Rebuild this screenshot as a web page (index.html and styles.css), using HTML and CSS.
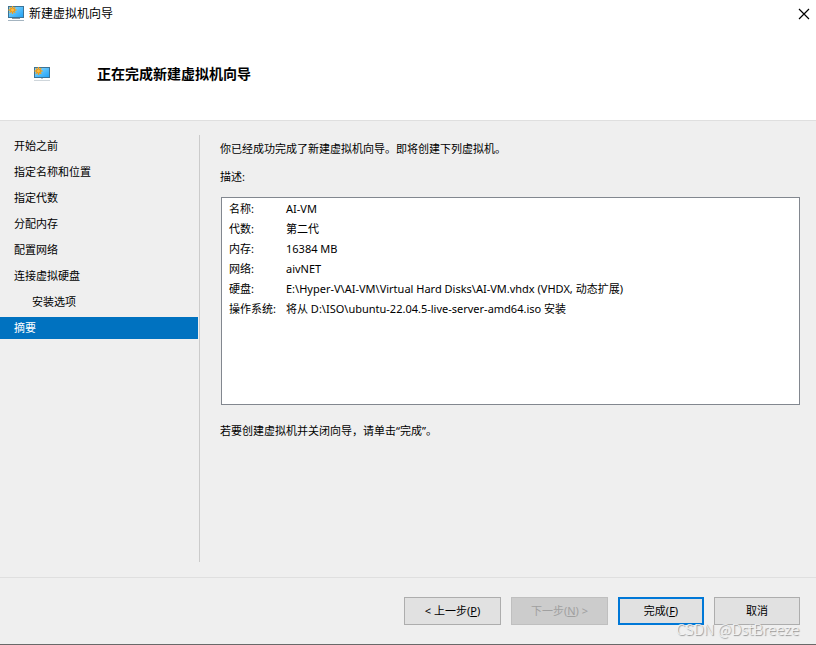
FILE: index.html
```html
<!DOCTYPE html>
<html lang="zh-CN">
<head>
  <meta charset="UTF-8" />
  <meta name="viewport" content="width=device-width, initial-scale=1" />
  <title>新建虚拟机向导</title>
  <link rel="stylesheet" href="styles.css">
</head>
<body>
  <svg class="sprite" aria-hidden="true">
    <defs>
      <linearGradient id="tela" x1="0" y1="0" x2="1" y2="1">
        <stop offset="0" stop-color="#8fdcff" />
        <stop offset="1" stop-color="#1ea0f5" />
      </linearGradient>
    </defs>
    <symbol id="monitor" viewBox="0 0 16 16">
      <rect x="0.5" y="0.5" width="15" height="11" fill="url(#tela)" stroke="#3c7396" />
      <path d="M7 12h2v1H7z" fill="#b4c3cd" />
      <path d="M4 12h8v1H4z" fill="#8799a6" />
      <path d="M0 14h16v1H0z" fill="#a4b4c0" />
      <path d="M4.5 0v8M.5 4h8M1.700 1.200l5.600 5.600M7.300 1.200L1.700 6.800" stroke="#f5a21b" stroke-width="1.3" />
      <circle cx="4.5" cy="4" r="2" fill="#ffbe3d" stroke="#dc8a18" stroke-width="0.7" />
    </symbol>
    <symbol id="monitor-small" viewBox="0 0 16 14">
      <rect x="0.5" y="0.5" width="15" height="10" fill="url(#tela)" stroke="#3c7396" />
      <path d="M7 11h2v1H7z" fill="#b4c3cd" />
      <path d="M0 13h16v1H0z" fill="#cfd6db" />
      <path d="M4.500 0v8M.5 4h8M1.700 1.200l5.600 5.600M7.300 1.200L1.700 6.800" stroke="#f5a21b" stroke-width="1.3" />
      <circle cx="4.5" cy="4" r="2" fill="#ffbe3d" stroke="#dc8a18" stroke-width="0.7" />
    </symbol>
  </svg>

  <div class="wizard">
    <div class="titlebar">
      <svg class="app-icon"><use href="#monitor" /></svg>
      <span class="title">新建虚拟机向导</span>
      <button class="close" type="button" aria-label="关闭">
        <svg viewBox="0 0 10 10"><path d="M0 0l10 10M10 0L0 10" /></svg>
      </button>
    </div>

    <header class="header">
      <svg class="header-icon"><use href="#monitor-small" /></svg>
      <h1>正在完成新建虚拟机向导</h1>
    </header>

    <div class="content">
      <nav class="steps">
        <a href="#">开始之前</a>
        <a href="#">指定名称和位置</a>
        <a href="#">指定代数</a>
        <a href="#">分配内存</a>
        <a href="#">配置网络</a>
        <a href="#">连接虚拟硬盘</a>
        <a href="#" class="sub">安装选项</a>
        <a href="#" class="active" aria-current="step">摘要</a>
      </nav>

      <main class="page">
        <p>你已经成功完成了新建虚拟机向导。即将创建下列虚拟机。</p>
        <p id="descricao">描述:</p>
        <div class="summary">
          <table aria-labelledby="descricao">
            <tbody>
              <tr><th scope="row">名称:</th><td>AI-VM</td></tr>
              <tr><th scope="row">代数:</th><td>第二代</td></tr>
              <tr><th scope="row">内存:</th><td>16384 MB</td></tr>
              <tr><th scope="row">网络:</th><td>aivNET</td></tr>
              <tr><th scope="row">硬盘:</th><td>E:\Hyper-V\AI-VM\Virtual Hard Disks\AI-VM.vhdx (VHDX, 动态扩展)</td></tr>
              <tr><th scope="row">操作系统:</th><td>将从 D:\ISO\ubuntu-22.04.5-live-server-amd64.iso 安装</td></tr>
            </tbody>
          </table>
        </div>
        <p>若要创建虚拟机并关闭向导，请单击“完成”。</p>
      </main>
    </div>

    <footer class="footer">
      <button type="button" class="wide">&lt; 上一步(<u>P</u>)</button>
      <button type="button" class="wide" disabled>下一步(<u>N</u>) &gt;</button>
      <button type="button" class="default">完成(<u>F</u>)</button>
      <button type="button">取消</button>
      <span class="watermark">CSDN @DstBreeze</span>
    </footer>
  </div>
</body>
</html>
```

FILE: styles.css
```css
* {
  box-sizing: border-box;
}

body {
  margin: 0;
  font-family: "Noto Sans", "Noto Sans CJK SC", sans-serif;
  font-size: 11px;
  line-height: 20px;
  color: #000;
  background-color: #efefef;
}

.sprite {
  position: absolute;
  width: 0;
  height: 0;
}

.wizard {
  display: flex;
  flex-direction: column;
  min-height: 100vh;
  border-bottom: 1px solid #696969;
}

/* title bar */
.titlebar {
  display: flex;
  align-items: center;
  height: 27px;
  padding: 0 7px 0 8px;
  background-color: #fff;
}

.app-icon {
  width: 16px;
  height: 16px;
}

.title {
  flex: 1;
  margin-left: 5px;
  font-size: 12px;
}

.close {
  display: flex;
  padding: 0;
  border: none;
  background: none;
}

.close svg {
  width: 10px;
  height: 10px;
  overflow: visible;
  stroke: #000;
  stroke-width: 1.2;
}

.header {
  display: flex;
  align-items: center;
  height: 94px;
  padding: 1px 34px 0;
  border-bottom: 1px solid #dfdfdf;
  background-color: #fff;
}

.header-icon {
  width: 16px;
  height: 14px;
}

h1 {
  margin: 0 0 0 47px;
  font-size: 14px;
  font-weight: bold;
}

/* steps + page */
.content {
  display: flex;
  flex: 1;
  padding: 14px 16px 15px 0;
}

.steps {
  display: flex;
  flex-direction: column;
  gap: 4px;
  width: 200px;
  padding-right: 1px;
  border-right: 1px solid #cbcbcb;
}

.steps a {
  padding-left: 14px;
  line-height: 22px;
  color: #000;
  text-decoration: none;
}

.steps .sub {
  padding-left: 32px;
}

.steps .active {
  background-color: #0072c0;
  color: #fff;
}

.page {
  flex: 1;
  padding: 4px 0 0 20px;
}

.page p {
  margin: 0 0 8px;
}

.summary {
  height: 208px;
  margin: 10px 0 16px 1px;
  padding: 1px 7px;
  border: 1px solid #82878f;
  background-color: #fff;
}

table {
  border-collapse: collapse;
}

th, td {
  padding: 0;
  font-weight: normal;
  text-align: left;
}

th {
  width: 57px;
}

/* buttons */
.footer {
  position: relative;
  display: flex;
  justify-content: flex-end;
  gap: 10px;
  padding: 19px 16px;
  border-top: 1px solid #dfdfdf;
}

.footer button {
  width: 86px;
  height: 28px;
  padding: 0;
  border: 1px solid #adadad;
  background-color: #e1e1e1;
  color: #000;
  font: inherit;
}

.footer .wide {
  width: 97px;
}

.footer .default {
  border: 2px solid #0078d7;
}

.footer button:disabled {
  border-color: #bfbfbf;
  background-color: #ccc;
  color: #a0a0a0;
}

.watermark {
  position: absolute;
  right: 17px;
  bottom: 5px;
  font-family: "Noto Sans CJK SC", sans-serif;
  font-size: 15px;
  font-weight: 300;
  color: #f4f4f4;
  text-shadow: 1px 1px 1px #888;
  pointer-events: none;
}
```
